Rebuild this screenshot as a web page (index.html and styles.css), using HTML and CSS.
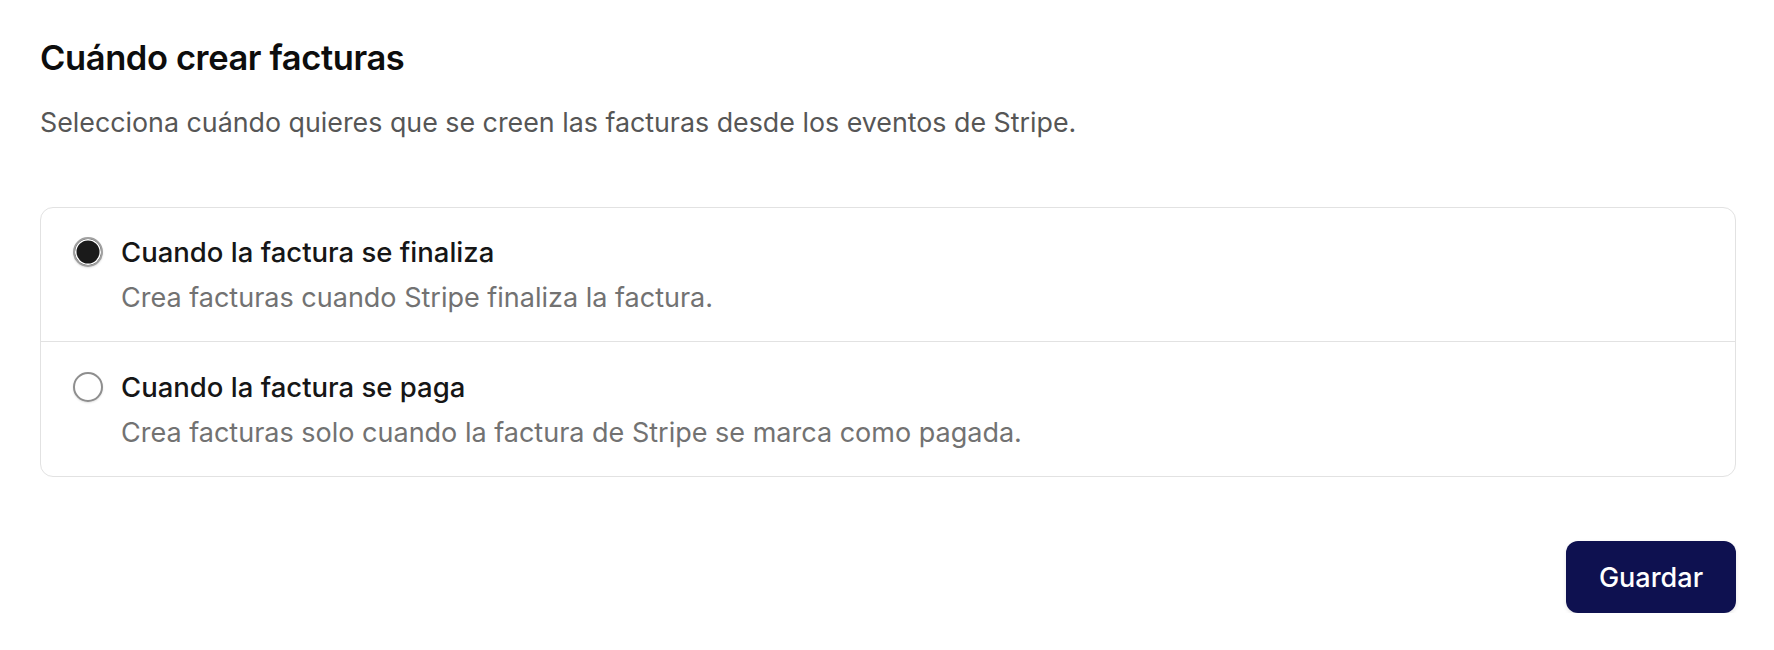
FILE: index.html
```html
<!DOCTYPE html>
<html lang="es">
<head>
<meta charset="utf-8">
<title>Cuándo crear facturas</title>
<link rel="stylesheet" href="styles.css">
</head>
<body>
<main class="page">
  <h1 class="title">Cuándo crear facturas</h1>
  <p class="subtitle">Selecciona cuándo quieres que se creen las facturas desde los eventos de Stripe.</p>
  <div class="options">
    <label class="option">
      <span class="radio radio-checked"></span>
      <span class="option-text">
        <span class="option-title">Cuando la factura se finaliza</span>
        <span class="option-desc">Crea facturas cuando Stripe finaliza la factura.</span>
      </span>
    </label>
    <label class="option">
      <span class="radio"></span>
      <span class="option-text">
        <span class="option-title">Cuando la factura se paga</span>
        <span class="option-desc">Crea facturas solo cuando la factura de Stripe se marca como pagada.</span>
      </span>
    </label>
  </div>
  <div class="actions">
    <button class="btn-primary" type="button">Guardar</button>
  </div>
</main>
</body>
</html>
```

FILE: styles.css
```css
html, body {
  margin: 0;
  padding: 0;
  background: #ffffff;
}

body {
  font-family: Inter, "Noto Sans", "Liberation Sans", sans-serif;
  color: #111111;
}

.page {
  padding: 38px 38px 0 40px;
}

.title {
  margin: 0;
  font-size: 34.5px;
  line-height: 40px;
  font-weight: 600;
  letter-spacing: -0.4px;
  color: #0d0d0d;
}

.subtitle {
  margin: 28px 0 0;
  font-size: 26.8px;
  line-height: 32px;
  font-weight: 400;
  color: #565656;
}

.options {
  margin-top: 69px;
  border: 1px solid #e2e2e2;
  border-radius: 13px;
  display: flex;
  flex-direction: column;
}

.option {
  display: flex;
  align-items: flex-start;
  gap: 18px;
  padding: 28px 32px 27px;
}

.option + .option {
  border-top: 1px solid #e2e2e2;
  padding-top: 29px;
  padding-bottom: 27px;
}

.radio {
  flex: none;
  width: 30px;
  height: 30px;
  margin-top: 1px;
  box-sizing: border-box;
  border-radius: 50%;
  border: 2px solid #8e8e8e;
  background: #ffffff;
  box-shadow: 0 1px 2px rgba(0, 0, 0, 0.12);
}

.radio-checked {
  border: 2px solid #a0a0a0;
  background: #1a1a1a;
  box-shadow: inset 0 0 0 1.5px #ffffff, 0 1px 2px rgba(0, 0, 0, 0.12);
}

.option-text {
  display: flex;
  flex-direction: column;
  gap: 14px;
}

.option-title {
  font-size: 27.5px;
  line-height: 32px;
  font-weight: 450;
  color: #161616;
}

.option-desc {
  font-size: 27px;
  line-height: 32px;
  color: #727272;
}

.actions {
  margin-top: 64px;
  display: flex;
  justify-content: flex-end;
}

.btn-primary {
  width: 170px;
  height: 72px;
  border: none;
  border-radius: 12px;
  background: #0e1150;
  color: #ffffff;
  font-family: Inter, "Noto Sans", "Liberation Sans", sans-serif;
  font-size: 27px;
  font-weight: 500;
  box-shadow: 0 2px 4px rgba(0, 0, 0, 0.1);
  cursor: pointer;
}
```
